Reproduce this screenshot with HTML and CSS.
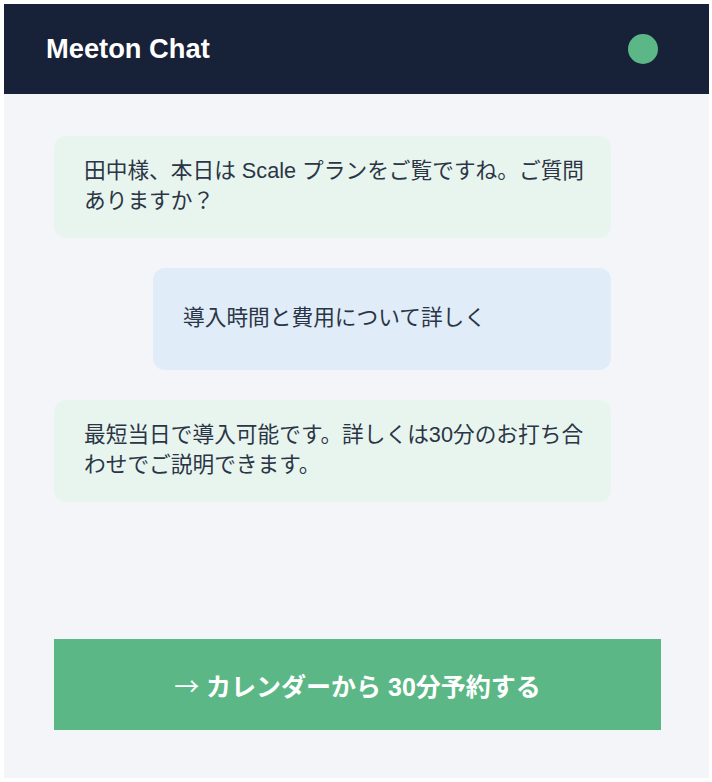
FILE: index.html
```html
<!DOCTYPE html>
<html lang="ja">
<head>
<meta charset="utf-8">
<title>Meeton Chat</title>
<link rel="stylesheet" href="styles.css">
</head>
<body>
<div class="chat">
  <header class="chat-header">
    <h1 class="chat-title">Meeton Chat</h1>
    <span class="status-dot"></span>
  </header>
  <main class="chat-body">
    <div class="messages">
      <div class="bubble bubble-bot">田中様、本日は Scale プランをご覧ですね。ご質問ありますか？</div>
      <div class="bubble bubble-user">導入時間と費用について詳しく</div>
      <div class="bubble bubble-bot">最短当日で導入可能です。詳しくは30分のお打ち合わせでご説明できます。</div>
    </div>
    <button class="cta"><span class="cta-arrow">→</span> カレンダーから 30分予約する</button>
  </main>
</div>
</body>
</html>
```

FILE: styles.css
```css
html, body {
  margin: 0;
  padding: 0;
  background: #ffffff;
}
body {
  padding: 4px 3px 4px 4px;
  font-family: "Liberation Sans", "Noto Sans CJK JP", sans-serif;
}
.chat {
  height: 774px;
  background: #f3f5f9;
  display: flex;
  flex-direction: column;
}
.chat-header {
  height: 90px;
  flex: none;
  background: #172239;
  display: flex;
  align-items: center;
  justify-content: space-between;
  padding: 0 51px 0 42px;
}
.chat-title {
  margin: 0;
  color: #ffffff;
  font-size: 27.3px;
  font-weight: 700;
}
.status-dot {
  width: 30px;
  height: 30px;
  border-radius: 50%;
  background: #5bb886;
}
.chat-body {
  flex: 1;
  display: flex;
  flex-direction: column;
  padding: 42px 48px 48px 50px;
}
.messages {
  width: 557px;
  display: flex;
  flex-direction: column;
  gap: 30px;
}
.bubble {
  box-sizing: border-box;
  border-radius: 12px;
  color: #2b3546;
  font-size: 21.7px;
  line-height: 30px;
  padding: 20px 20px 22px 30px;
  min-height: 102px;
}
.bubble-bot {
  background: #e8f5ee;
}
.bubble-user {
  background: #e0edf9;
  margin-left: 99px;
  padding: 35px 30px 37px;
}
.cta {
  margin-top: auto;
  height: 91px;
  width: 607px;
  border: none;
  background: #5bb886;
  color: #ffffff;
  font-family: "Liberation Sans", "Noto Sans CJK JP", sans-serif;
  font-size: 25px;
  font-weight: 700;
}
.cta-arrow {
  font-family: "Noto Sans CJK JP", sans-serif;
  font-weight: 400;
}
```
